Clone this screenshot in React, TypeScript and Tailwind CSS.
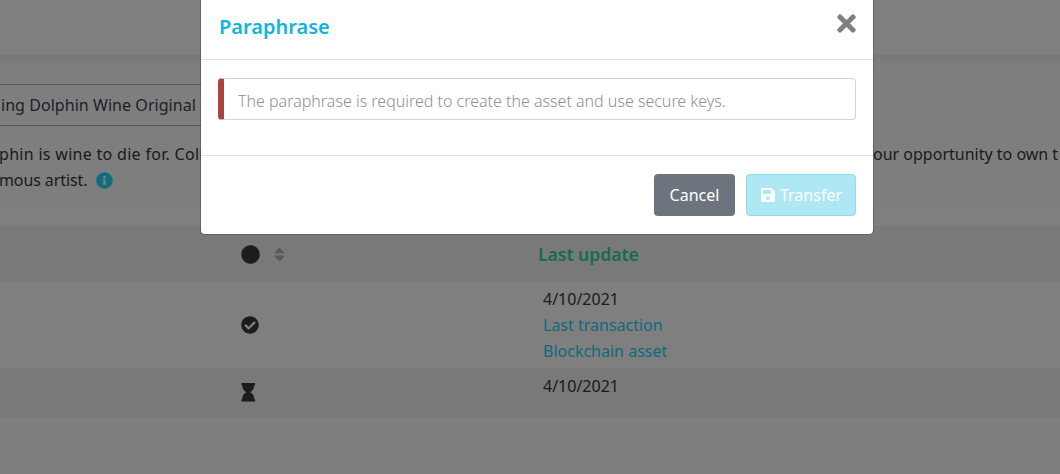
import React from "react";
import {FaCheckCircle, FaCircle, FaHourglass, FaInfoCircle, FaSave, FaSort, FaTimes} from "react-icons/fa";

const font = "font-['Noto_Sans','Open_Sans',sans-serif]";

function App() {
    return <div className={`relative w-[1060px] h-[474px] overflow-hidden bg-[#fdfdfd] text-[#383838] text-[16px] ${font}`}>
        {/* page behind the modal */}
        <div className="h-[54px] bg-white"/>
        <div className="h-[14px] bg-gradient-to-b from-[#f0f0f0] to-[#fdfdfd]"/>
        <div className="h-[16px]"/>
        <div className="h-[42px] -ml-[12px] w-[300px] border border-[#a8aeb4] rounded flex items-center px-3 whitespace-nowrap overflow-hidden text-[#3d4450] tracking-[0.05px]">
            ing Dolphin Wine Original Dolphin
        </div>
        <div className="h-[82px] pt-[15px] leading-[26px] whitespace-nowrap">
            <div className="flex -ml-[1px]">
                <span className="w-[874px] overflow-hidden tracking-[0.3px]">phin is wine to die for. Collect this bottle of wine and take your chance</span>
                <span>our opportunity to own t</span>
            </div>
            <div className="-ml-[1px] flex items-center gap-2 -tracking-[0.1px]">mous artist. <FaInfoCircle className="text-[#1cdcff] text-[17px] ml-px"/></div>
        </div>
        <div className="h-[18px] bg-white"/>
        <div className="h-[56px] bg-[#f2f2f2] flex items-center">
            <div className="w-[241px]"/>
            <div className="w-[297px] flex items-center gap-[11px]">
                <FaCircle className="text-[19px] text-[#383838]"/>
                <FaSort className="text-[17px] text-[#b4b4b4]"/>
            </div>
            <div className="font-semibold text-[17.5px] text-[#2cd8a4]">Last update</div>
        </div>
        <div className="h-[86px] flex items-center bg-white">
            <div className="w-[241px]"/>
            <div className="w-[302px]"><FaCheckCircle className="text-[18px]"/></div>
            <div className="leading-[26px]">
                <div>4/10/2021</div>
                <div className="text-[#1cd4fa]">Last transaction</div>
                <div className="text-[#1cd4fa]">Blockchain asset</div>
            </div>
        </div>
        <div className="h-[49px] flex bg-[#f2f2f2]">
            <div className="w-[241px]"/>
            <div className="w-[302px] pt-[15px]"><FaHourglass className="text-[18.5px] -ml-[2px]"/></div>
            <div className="leading-[26px] pt-[5px]">4/10/2021</div>
        </div>

        {/* backdrop */}
        <div className="absolute inset-0 bg-black/50"/>

        {/* modal */}
        <div className="absolute left-[200px] -top-px w-[674px] h-[236px] bg-white bg-clip-padding border border-black/20 rounded-b-[5px] flex flex-col">
            <div className="h-[60px] shrink-0 border-b border-[#dee2e6] flex items-start justify-between pl-[18px] pr-[13px]">
                <span className="text-[20px] font-semibold text-[#10b4e0] pt-[12px]">Paraphrase</span>
                <FaTimes className="text-[27px] text-[#808080] mt-[10px]"/>
            </div>
            <div className="h-[96px] shrink-0 border-b border-[#dee2e6] pt-[18px] px-[17px]">
                <div className="h-[42px] border border-[#ced4da] border-l-[6px] border-l-[#a94442] rounded flex items-center pl-[14px] pt-[3px] font-light text-[#8a9199]">
                    The paraphrase is required to create the asset and use secure keys.
                </div>
            </div>
            <div className="flex-1 flex justify-end gap-[11px] pt-[18px] pr-[17px]">
                <button className="w-[81px] h-[42px] rounded bg-[#6c757d] text-white">Cancel</button>
                <button className="w-[110px] h-[42px] rounded bg-[#ade8f4] border border-[#8fdcee] text-white flex items-center justify-center gap-[4px]">
                    <FaSave className="text-[16px]"/>Transfer
                </button>
            </div>
        </div>
    </div>
}

export default App;
